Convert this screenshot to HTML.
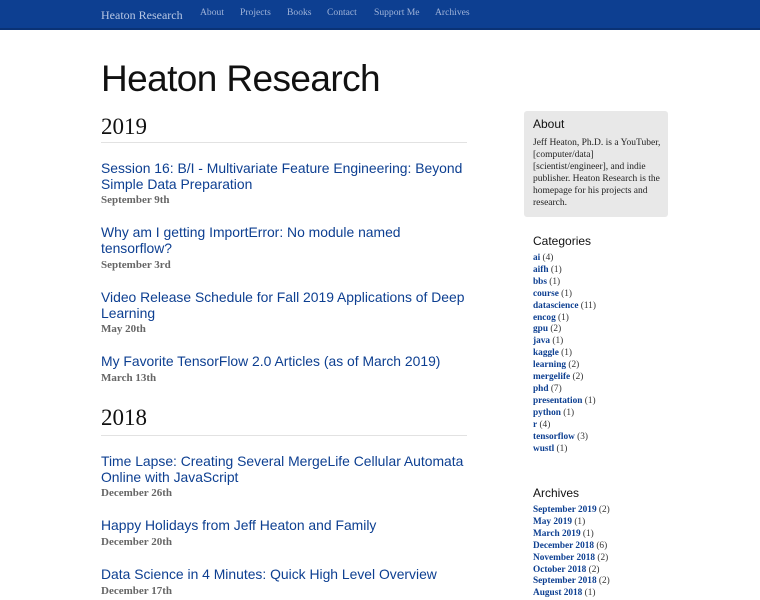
<!DOCTYPE html>
<html><head><meta charset="utf-8"><style>
*{margin:0;padding:0;box-sizing:border-box}
body{width:760px;height:600px;overflow:hidden;background:#fff;position:relative;font-family:"Liberation Serif",serif}
.nav{position:absolute;left:0;top:0;width:760px;height:30px;background:#0d3f91;border-bottom:2px solid #0a3275}
.nav span{position:absolute;top:7px;color:#9fb3d9;font-size:9.6px}
.nav .brand{top:8px;font-size:12px;color:#b8c7e4}
h1{position:absolute;left:101px;top:58px;font:37px "Liberation Sans",sans-serif;color:#111;letter-spacing:-0.6px}
.yr{position:absolute;left:101px;font-size:23px;color:#111}
.hr{position:absolute;left:101px;width:366px;height:1px;background:#e2e2e2}
.t{position:absolute;left:101px;width:370px;font:13.9px/16px "Liberation Sans",sans-serif;color:#0d3f91}
.d{position:absolute;left:101px;font-size:11px;color:#666;font-weight:bold}
.box{position:absolute;left:524px;top:111px;width:144px;height:106px;background:#e8e8e8;border-radius:3px}
.sh{position:absolute;left:533px;font:12px "Liberation Sans",sans-serif;color:#111}
.sl{position:absolute;left:533px;font-size:9.3px;line-height:11.9px;color:#333}
.sl b{color:#0d3f91}
</style></head><body>
<div class="nav">
<span class="brand" style="left:101px">Heaton Research</span>
<span style="left:200px">About</span>
<span style="left:240px">Projects</span>
<span style="left:287px">Books</span>
<span style="left:327px">Contact</span>
<span style="left:374px">Support Me</span>
<span style="left:435px">Archives</span>
</div>
<h1>Heaton Research</h1>
<div class="yr" style="top:114px">2019</div>
<div class="hr" style="top:142px"></div>
<div class="t" style="top:160px">Session 16: B/I - Multivariate Feature Engineering: Beyond Simple Data Preparation</div>
<div class="d" style="top:194px">September 9th</div>
<div class="t" style="top:224px">Why am I getting ImportError: No module named tensorflow?</div>
<div class="d" style="top:259px">September 3rd</div>
<div class="t" style="top:289px">Video Release Schedule for Fall 2019 Applications of Deep Learning</div>
<div class="d" style="top:323px">May 20th</div>
<div class="t" style="top:353px">My Favorite TensorFlow 2.0 Articles (as of March 2019)</div>
<div class="d" style="top:372px">March 13th</div>
<div class="yr" style="top:405px">2018</div>
<div class="hr" style="top:435px"></div>
<div class="t" style="top:453px">Time Lapse: Creating Several MergeLife Cellular Automata Online with JavaScript</div>
<div class="d" style="top:487px">December 26th</div>
<div class="t" style="top:517px">Happy Holidays from Jeff Heaton and Family</div>
<div class="d" style="top:536px">December 20th</div>
<div class="t" style="top:566px">Data Science in 4 Minutes: Quick High Level Overview</div>
<div class="d" style="top:585px">December 17th</div>

<div class="box"></div>
<div class="sh" style="top:117px">About</div>
<div class="sl" style="top:137px;width:134px;font-size:9.5px;line-height:12px;color:#222">Jeff Heaton, Ph.D. is a YouTuber, [computer/data] [scientist/engineer], and indie publisher. Heaton Research is the homepage for his projects and research.</div>
<div class="sh" style="top:234px">Categories</div>
<div class="sl" style="top:253px">
<b>ai</b> (4)<br><b>aifh</b> (1)<br><b>bbs</b> (1)<br><b>course</b> (1)<br><b>datascience</b> (11)<br><b>encog</b> (1)<br><b>gpu</b> (2)<br><b>java</b> (1)<br><b>kaggle</b> (1)<br><b>learning</b> (2)<br><b>mergelife</b> (2)<br><b>phd</b> (7)<br><b>presentation</b> (1)<br><b>python</b> (1)<br><b>r</b> (4)<br><b>tensorflow</b> (3)<br><b>wustl</b> (1)</div>
<div class="sh" style="top:486px">Archives</div>
<div class="sl" style="top:505px">
<b>September 2019</b> (2)<br><b>May 2019</b> (1)<br><b>March 2019</b> (1)<br><b>December 2018</b> (6)<br><b>November 2018</b> (2)<br><b>October 2018</b> (2)<br><b>September 2018</b> (2)<br><b>August 2018</b> (1)</div>
</body></html>
